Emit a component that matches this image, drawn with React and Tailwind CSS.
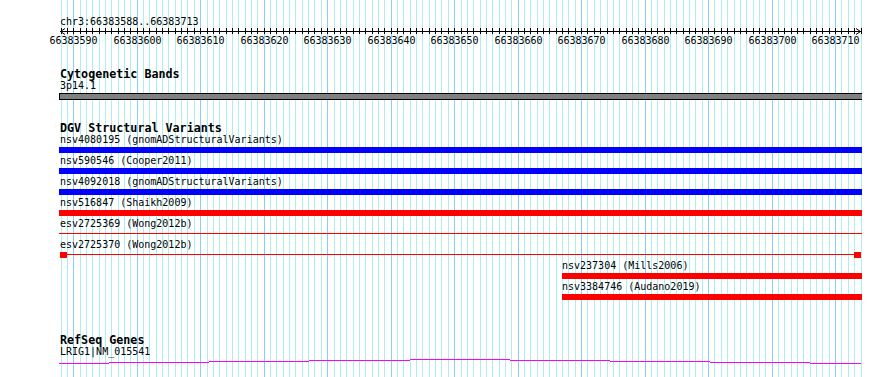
import React from 'react';

const START = 66383588;
const PX_PER_BASE = 800 / 126;

const gridLines = Array.from({ length: 127 }, (_, i) => ({
    x: Math.round(60.5 + i * PX_PER_BASE),
    major: (START + i) % 10 === 0,
    base: START + i,
}));

const variants = [
    { name: 'nsv4080195 (gnomADStructuralVariants)', kind: 'bar', color: 'bg-[#0000ff]' },
    { name: 'nsv590546 (Cooper2011)', kind: 'bar', color: 'bg-[#0000ff]' },
    { name: 'nsv4092018 (gnomADStructuralVariants)', kind: 'bar', color: 'bg-[#0000ff]' },
    { name: 'nsv516847 (Shaikh2009)', kind: 'bar', color: 'bg-[#ff0000]' },
    { name: 'esv2725369 (Wong2012b)', kind: 'line' },
    { name: 'esv2725370 (Wong2012b)', kind: 'ends' },
    { name: 'nsv237304 (Mills2006)', kind: 'partial' },
    { name: 'nsv3384746 (Audano2019)', kind: 'partial' },
];

// step heights of the coverage line under the gene label
const geneSteps = [
    [59, 109, 6], [109, 209, 5], [209, 309, 4], [309, 410, 3], [410, 510, 2],
    [510, 610, 3], [610, 710, 4], [710, 810, 5], [810, 861, 6],
];

const Grid = () => (
    <svg className="absolute inset-0" width="890" height="377" shapeRendering="crispEdges">
        {gridLines.map((line) => (
            <rect key={line.base} x={line.x} y="0" width="1" height="377" fill={line.major ? '#87cefa' : '#afeeee'} />
        ))}
    </svg>
);

const Ruler = () => (
    <svg width="890" height="20" className="block" shapeRendering="crispEdges">
        <rect x="60" y="4" width="801" height="1" fill="#000" />
        {gridLines.map((line) => (
            <rect key={line.base} x={line.x} y="1" width="1" height="6" fill="#000" />
        ))}
        <polyline points="65,1.5 60.5,4.5 65,7.5" fill="none" stroke="#000" strokeWidth="1" shapeRendering="auto" />
        <polyline points="856,1.5 860.5,4.5 856,7.5" fill="none" stroke="#000" strokeWidth="1" shapeRendering="auto" />
        {gridLines.filter((line) => line.major).map((line) => (
            <text key={line.base} x={line.x + 0.5} y="16.5" textAnchor="middle" fontFamily="DejaVu Sans Mono, monospace" fontSize="10" fill="#000">
                {line.base}
            </text>
        ))}
    </svg>
);

const VariantRow = ({ variant }) => {
    const partial = variant.kind === 'partial';
    return (
        <div className="mb-[3px]">
            <div className={`${partial ? 'pl-[562px]' : 'pl-[60px]'} text-[10px] leading-[10px] whitespace-pre`}>{variant.name}</div>
            {variant.kind === 'bar' && <div className={`mt-[2px] ml-[59px] w-[803px] h-[6px] ${variant.color}`} />}
            {variant.kind === 'line' && (
                <div className="mt-[2px] h-[6px] pt-[2px] ml-[59px] w-[803px]">
                    <div className="h-px bg-[#ff0000]" />
                </div>
            )}
            {variant.kind === 'ends' && (
                <div className="mt-[2px] h-[6px] ml-[60px] w-[801px] flex items-start">
                    <div className="w-[7px] h-[6px] bg-[#ff0000]" />
                    <div className="flex-1 h-px mt-[2px] bg-[#ff0000]" />
                    <div className="w-[7px] h-[6px] bg-[#ff0000]" />
                </div>
            )}
            {partial && <div className="mt-[2px] ml-[562px] w-[300px] h-[6px] bg-[#ff0000]" />}
        </div>
    );
};

const App = () => {
    return (
        <div className="relative w-[890px] h-[377px] overflow-hidden bg-white text-black font-['DejaVu_Sans_Mono',monospace]">
            <Grid />
            <div className="relative">
                <div className="pt-[16px] pl-[60px] text-[10px] leading-[11px]">chr3:66383588..66383713</div>
                <Ruler />

                <div className="mt-[21px] pl-[60px] text-[11.7px] leading-[12px] font-bold">Cytogenetic Bands</div>
                <div className="mt-[1px] pl-[60px] text-[10px] leading-[10px]">3p14.1</div>
                <div className="mt-[2px] ml-[59px] w-[803px] h-[7px] border-y border-l border-black bg-[#808080]" />

                <div className="mt-[22px] pl-[60px] text-[11.7px] leading-[12px] font-bold">DGV Structural Variants</div>
                <div className="mt-[1px]">
                    {variants.map((variant) => (
                        <VariantRow key={variant.name} variant={variant} />
                    ))}
                </div>

                <div className="mt-[34px] pl-[60px] text-[11.7px] leading-[12px] font-bold">RefSeq Genes</div>
                <div className="mt-[1px] pl-[60px] text-[10px] leading-[10px]">LRIG1|NM_015541</div>
                <svg width="890" height="9" className="block" shapeRendering="crispEdges">
                    {geneSteps.map(([x1, x2, y]) => (
                        <rect key={x1} x={x1} y={y} width={x2 - x1} height="1" fill="#ff00ff" />
                    ))}
                </svg>
            </div>
        </div>
    );
};

export default App;
